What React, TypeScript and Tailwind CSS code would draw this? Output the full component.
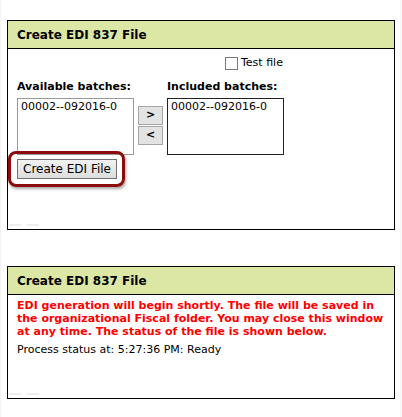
import { useState } from "react";

function PanelHeader({ title }: { title: string }) {
  return (
    <div className="flex h-[28px] items-center border-b border-black bg-[#dce7a5] pl-[9px] text-[12px] font-bold text-black">
      {title}
    </div>
  );
}

function Scrap() {
  // leftover faint marks at the panel's bottom-left corner
  return (
    <div className="absolute bottom-[3px] left-[1px] flex gap-[6px]">
      <div className="h-[2px] w-[12px] bg-[#eeeeee]" />
      <div className="h-[2px] w-[12px] bg-[#eeeeee]" />
    </div>
  );
}

function BatchList({ items, dark }: { items: string[]; dark?: boolean }) {
  return (
    <div
      className={`h-[57px] w-[117px] overflow-hidden bg-white pl-[3px] pt-[1px] text-[11px] leading-[14px] text-black ${
        dark ? "border border-[#222]" : "border border-[#9a9a9a]"
      }`}
    >
      {items.map((b) => (
        <div key={b}>{b}</div>
      ))}
    </div>
  );
}

export default function App() {
  const [testFile, setTestFile] = useState(false);
  const available = ["00002--092016-0"];
  const included = ["00002--092016-0"];

  return (
    <div className="relative min-h-[417px] bg-white pl-[7px] pt-[20px] font-['DejaVu_Sans',Verdana,sans-serif]">
      <div className="absolute left-0 top-0 h-full w-px bg-[#f3f3f3]" />
      <div className="absolute right-[1px] top-0 h-full w-px bg-[#f3f3f3]" />

      {/* batch selection panel */}
      <div className="relative h-[210px] w-[388px] border border-black">
        <PanelHeader title="Create EDI 837 File" />
        <div className="pl-[9px]">
          <label className="mt-[6px] flex items-center pl-[208px] text-[11px] text-black">
            <span
              onClick={() => setTestFile(!testFile)}
              className="h-[13px] w-[13px] border border-[#7a7a7a] bg-white"
            />
            <span className="ml-[3px]">Test file</span>
          </label>
          <div className="mt-[7px] flex text-[11px] font-bold text-black">
            <span className="w-[150px]">Available batches:</span>
            <span>Included batches:</span>
          </div>
          <div className="mt-[3px] flex">
            <BatchList items={available} />
            <div className="ml-[4px] mr-[4px] mt-[8px] flex flex-col gap-[1px]">
              <button className="flex h-[19px] w-[25px] items-center justify-center border border-[#a5a5a5] bg-[#e3e3e3] text-[11px] font-bold text-black">
                &gt;
              </button>
              <button className="flex h-[19px] w-[25px] items-center justify-center border border-[#a5a5a5] bg-[#e3e3e3] text-[11px] font-bold text-black">
                &lt;
              </button>
            </div>
            <BatchList items={included} dark />
          </div>
          <div className="relative mt-[4px] w-fit">
            <div className="absolute left-[-9px] top-[-8px] h-[36px] w-[117px] rounded-[8px] border-[3px] border-[#8c0c0c] shadow-[1px_2px_3px_rgba(0,0,0,0.35)]" />
            <button className="relative block h-[20px] w-[100px] border border-[#707070] bg-gradient-to-b from-[#f2f2f2] to-[#dddddd] text-[12px] text-black">
              Create EDI File
            </button>
          </div>
        </div>
        <Scrap />
      </div>

      {/* status panel */}
      <div className="relative mt-[36px] h-[133px] w-[388px] border border-black">
        <PanelHeader title="Create EDI 837 File" />
        <div className="pl-[9px] pt-[4px]">
          <p className="text-[11px] font-bold leading-[13px] text-[#ff0000]">
            EDI generation will begin shortly. The file will be saved in the organizational Fiscal
            folder. You may close this window at any time. The status of the file is shown below.
          </p>
          <p className="mt-[4px] text-[11px] text-black">Process status at: 5:27:36 PM: Ready</p>
        </div>
        <Scrap />
      </div>
    </div>
  );
}
